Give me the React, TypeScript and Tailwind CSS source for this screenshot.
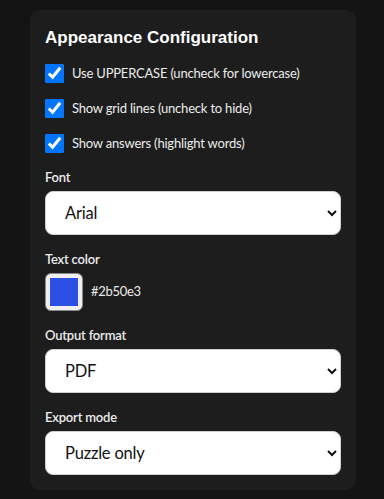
import { useState } from 'react';

const toggles = [
  'Use UPPERCASE (uncheck for lowercase)',
  'Show grid lines (uncheck to hide)',
  'Show answers (highlight words)'
];

const selects = [
  { label: 'Export mode', options: ['Puzzle only', 'Puzzle + answers', 'Answers only'] }
];

function Field({ label, children }: { label: string; children: React.ReactNode }) {
  return (
    <div className="flex flex-col gap-[4px]">
      <label className="text-[13px] leading-[20px] font-semibold tracking-[-0.2px] text-[#ececec]">{label}</label>
      {children}
    </div>
  );
}

function Select({ options }: { options: string[] }) {
  return (
    <select className="h-[44px] w-full rounded-lg border border-[#cfcfcf] bg-white px-[15px] text-[16.5px] tracking-[-0.2px] text-[#111]">
      {options.map((o) => (
        <option key={o}>{o}</option>
      ))}
    </select>
  );
}

export default function App() {
  const [color] = useState('#2b50e3');

  return (
    <div className="min-h-[499px] bg-[#141414] pt-[10px] pl-[30px] pr-[28px] font-['Lato',sans-serif]">
      <div className="flex flex-col gap-[14px] rounded-[10px] bg-[#1d1d1d] px-[15px] pt-[17px] pb-[15px]">
        <h2 className="mb-[1px] font-['Liberation_Sans',Arial,sans-serif] text-[17px] leading-[22px] font-bold text-white">
          Appearance Configuration
        </h2>

        {/* Checkboxes */}
        <div className="flex flex-col gap-[16px]">
          {toggles.map((t) => (
            <label key={t} className="flex items-center gap-[8px] text-[13px] leading-[19px] tracking-[-0.2px] text-[#ececec]">
              <input type="checkbox" defaultChecked className="m-0 h-[19px] w-[19px] accent-[#0075ff]" />
              {t}
            </label>
          ))}
        </div>

        <Field label="Font">
          <Select options={['Arial', 'Times New Roman', 'Courier New']} />
        </Field>

        <Field label="Text color">
          <div className="flex items-center gap-[8px]">
            <div className="h-[38px] w-[38px] rounded-[6px] border border-[#8a8a8a] bg-[#efefef] p-[4px]">
              <div className="h-full w-full" style={{ backgroundColor: color }} />
            </div>
            <span className="text-[13px] tracking-[-0.3px] text-[#ececec]">{color}</span>
          </div>
        </Field>

        <Field label="Output format">
          <Select options={['PDF', 'PNG', 'SVG']} />
        </Field>

        {selects.map((s) => (
          <Field key={s.label} label={s.label}>
            <Select options={s.options} />
          </Field>
        ))}
      </div>
    </div>
  );
}
